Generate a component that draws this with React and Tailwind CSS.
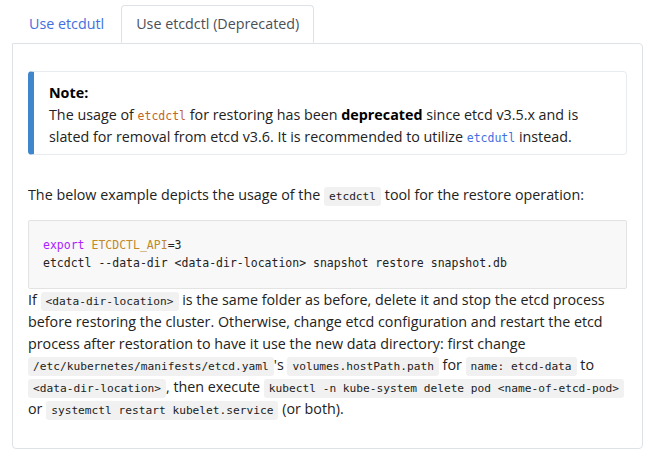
import React from "react";

const sans = { fontFamily: '"Open Sans", "Noto Sans", sans-serif' };

function Code({ children }) {
  return (
    <code className="rounded-[3px] bg-[#f1f1f1] px-[5px] py-[3px] font-['DejaVu_Sans_Mono',monospace] text-[11.2px] leading-none text-[#222]">
      {children}
    </code>
  );
}

export default function App() {
  return (
    <div className="h-[454px] overflow-hidden bg-white pl-3 pr-[15px] pt-[5px] text-[14.3px] text-[#222]" style={sans}>
      {/* tabs */}
      <div className="flex">
        <button className="h-[38px] border border-transparent px-4 text-[14.3px] text-[#3f6fe0]">
          Use etcdutl
        </button>
        <button className="relative z-10 -mb-px h-[38px] rounded-t-[4px] border border-b-white border-[#dee2e6] bg-white px-[14px] text-[14.3px] text-[#495057]">
          Use etcdctl (Deprecated)
        </button>
      </div>

      {/* panel */}
      <div className="h-[406px] rounded-b-[4px] rounded-tr-[4px] border border-[#dee2e6] px-[15px] pt-[27px]">
        <div className="rounded-[4px] border border-l-[6px] border-[#e9ecef] border-l-[#3f86cc] pb-[6px] pl-[15px] pr-4 pt-[10px] leading-[22px]">
          <p className="font-bold text-black">Note:</p>
          <p>
            The usage of{" "}
            <code className="font-['DejaVu_Sans_Mono',monospace] text-[11.5px] leading-none text-[#c0651f]">etcdctl</code>{" "}
            for restoring has been <strong className="font-bold text-black">deprecated</strong> since etcd v3.5.x and is
            slated for removal from etcd v3.6. It is recommended to utilize{" "}
            <code className="font-['DejaVu_Sans_Mono',monospace] text-[11.5px] leading-none text-[#3f6fe0]">etcdutl</code>{" "}
            instead.
          </p>
        </div>

        <p className="mt-[29px] leading-[22px]">
          The below example depicts the usage of the <Code>etcdctl</Code> tool for the restore operation:
        </p>

        <pre className="mt-[14px] rounded-[2px] border border-[#e3e3e3] bg-[#f8f8f8] px-[14px] pb-[16px] pt-[15px] font-['DejaVu_Sans_Mono',monospace] text-[11.5px] leading-[18px] text-[#222]">
          <span className="text-[#aa22ff]">export</span> <span className="text-[#c08a2b]">ETCDCTL_API</span>=3
          {"\n"}etcdctl --data-dir &lt;data-dir-location&gt; snapshot restore snapshot.db
        </pre>

        <p className="leading-[21.8px]">
          If <Code>&lt;data-dir-location&gt;</Code> is the same folder as before, delete it and stop the etcd process
          before restoring the cluster. Otherwise, change etcd configuration and restart the etcd process after
          restoration to have it use the new data directory: first change{" "}
          <Code>/etc/kubernetes/manifests/etcd.yaml</Code>'s <Code>volumes.hostPath.path</Code> for{" "}
          <Code>name: etcd-data</Code> to <Code>&lt;data-dir-location&gt;</Code>, then execute{" "}
          <Code>kubectl -n kube-system delete pod &lt;name-of-etcd-pod&gt;</Code> or{" "}
          <Code>systemctl restart kubelet.service</Code> (or both).
        </p>
      </div>

      <p className="mt-[1px] leading-[22px]">
        For more information on restoring a cluster from a snapshot file, see the etcd documentation.
      </p>
    </div>
  );
}
